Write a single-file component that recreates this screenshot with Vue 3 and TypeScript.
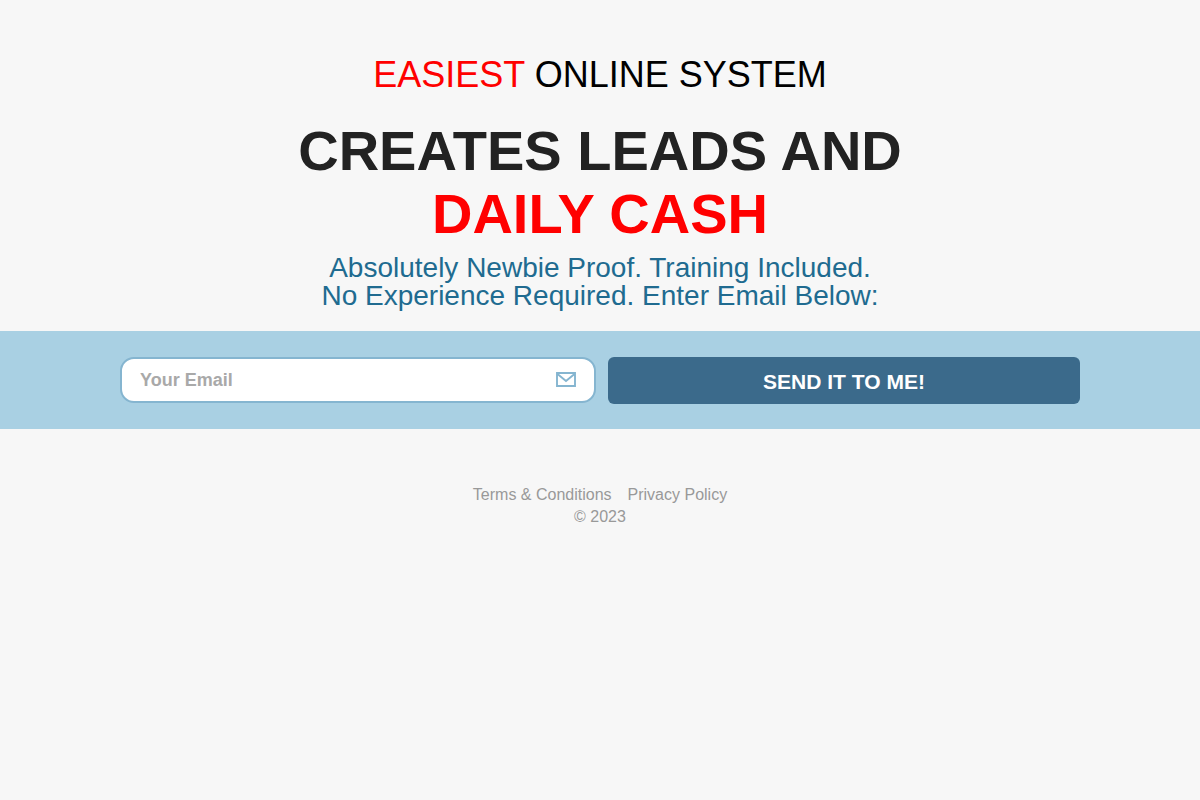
<script setup lang="ts">
import { ref } from 'vue'

const email = ref<string>('')
</script>

<template>
  <div class="page">
    <header class="hero">
      <p class="kicker"><span class="red">EASIEST</span> ONLINE SYSTEM</p>
      <h1 class="headline">CREATES LEADS AND<br /><span class="red">DAILY CASH</span></h1>
      <p class="subline">Absolutely Newbie Proof. Training Included.<br />No Experience Required. Enter Email Below:</p>
    </header>
    <main class="band">
      <form class="signup" @submit.prevent>
        <div class="field">
          <input v-model="email" class="email" type="email" placeholder="Your Email" aria-label="Your Email" />
          <svg class="icon" viewBox="0 0 20 15" aria-hidden="true">
            <path d="M1 1h18v13H1z M1.5 2L10 9L18.500 2" fill="none" stroke="#85b5d0" stroke-width="1.900" />
          </svg>
        </div>
        <button class="send" type="submit">SEND IT TO ME!</button>
      </form>
    </main>
    <footer class="footer">
      <nav class="links">
        <a href="#terms">Terms &amp; Conditions</a>
        <a href="#privacy">Privacy Policy</a>
      </nav>
      <div>© 2023</div>
    </footer>
  </div>
</template>

<style>
body {
  background: #f7f7f7;
}
</style>

<style scoped>
.page {
  font-family: "Liberation Sans", Arial, sans-serif;
  text-align: center;
}
.hero {
  padding: 54px 20px 21px;
}
.kicker {
  margin: 0;
  font-size: 36px;
  line-height: 42px;
  color: #000;
}
.red {
  color: #f00;
}
.headline {
  margin: 23px 0 9px;
  font-size: 56px;
  line-height: 63px;
  font-weight: 700;
  color: #222;
}
.subline {
  margin: 0;
  font-size: 28px;
  line-height: 28px;
  color: #206b90;
}
.band {
  padding: 26px 20px 25px;
  background: #a9d0e3;
}
.signup {
  display: grid;
  grid-template-columns: minmax(0, 119fr) minmax(0, 118fr);
  gap: 12px;
  max-width: 960px;
  margin: 0 auto;
}
.field {
  position: relative;
}
.email {
  display: block;
  box-sizing: border-box;
  width: 100%;
  height: 46px;
  padding: 0 52px 0 18px;
  border: 2px solid #85b5d0;
  border-radius: 14px;
  background: #fff;
  font: 700 18px "Liberation Sans", Arial, sans-serif;
  color: #333;
}
.email::placeholder {
  color: #a9a9a9;
}
.icon {
  position: absolute;
  top: 15px;
  right: 20px;
  width: 20px;
  height: 15px;
}
.send {
  height: 47px;
  padding: 2px 12px 0;
  border: 0;
  border-radius: 6px;
  background: #3b6a8b;
  color: #fff;
  font: 700 21px "Liberation Sans", Arial, sans-serif;
  cursor: pointer;
}
.footer {
  padding: 55px 20px 20px;
  font-size: 16px;
  line-height: 22px;
  color: #999;
}
.links {
  display: flex;
  justify-content: center;
  gap: 16px;
}
.links a {
  color: inherit;
  text-decoration: none;
}
</style>
